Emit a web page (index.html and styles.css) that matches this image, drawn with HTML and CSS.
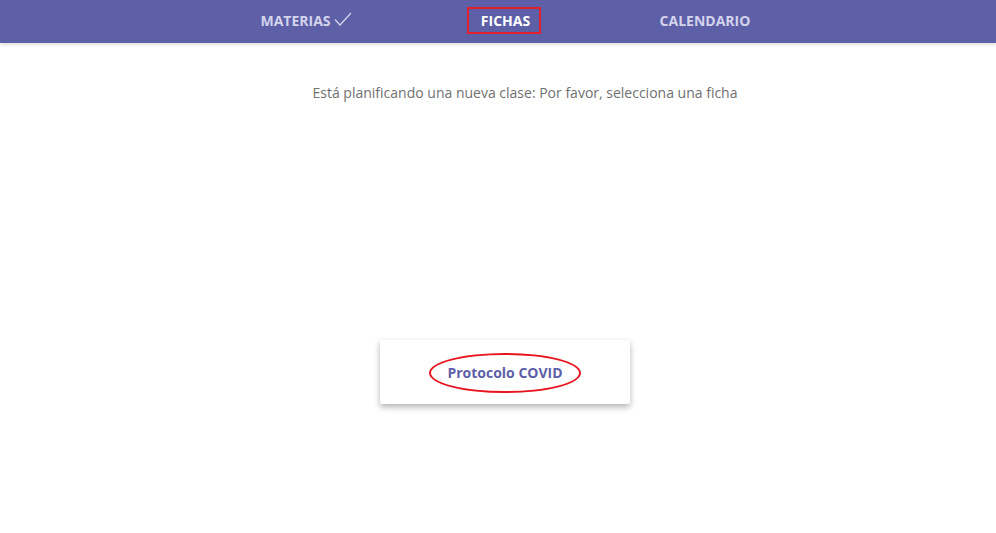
FILE: index.html
```html
<!DOCTYPE html>
<html lang="es">
<head>
    <meta charset="UTF-8">
    <meta name="viewport" content="width=device-width, initial-scale=1.0">
    <title>Fichas</title>
    <link rel="stylesheet" href="styles.css">
</head>
<body>
    <nav class="topbar">
        <div class="tabs">
            <a class="tab done" href="#">MATERIAS
                <svg class="check" width="18" height="15" viewBox="0 0 18 15"><path d="M1 7.5 L6 13 L17 1" fill="none" stroke="#d6d7ee" stroke-width="1.2"/></svg>
            </a>
            <a class="tab active" href="#">FICHAS</a>
            <a class="tab" href="#">CALENDARIO</a>
        </div>
    </nav>

    <main class="content">
        <p class="hint">Está planificando una nueva clase: Por favor, selecciona una ficha</p>

        <div class="cards">
            <div class="card">
                <span class="card-title">Protocolo COVID</span>
            </div>
        </div>
    </main>
</body>
</html>
```

FILE: styles.css
```css
html, body {
    min-height: 100%;
}

body {
    margin: 0;
    padding: 0;
    min-height: 533px;
    font-family: 'Open Sans', sans-serif;
    background-color: #fff;
    color: #6f6f6f;
}

.topbar {
    height: 43px;
    background-color: #5d5fa7;
    box-shadow: 0 2px 3px rgba(0, 0, 0, 0.12);
}

.tabs {
    display: grid;
    grid-template-columns: repeat(3, 200px);
    width: 600px;
    margin-left: 205px;
    height: 100%;
}

.tab {
    display: flex;
    align-items: center;
    justify-content: center;
    padding-bottom: 3px;
    box-sizing: border-box;
    text-decoration: none;
    font-size: 14px;
    font-weight: 700;
    color: #d3d4ec;
}

.tab.done {
    padding-left: 2px;
}

.tab .check {
    margin-left: 3px;
    margin-bottom: 1px;
}

.tab.active {
    justify-self: center;
    align-self: start;
    margin: 7px 0 0 -2px;
    height: 27px;
    padding: 0 9px 1px 12px;
    border: 2px solid #e0202d;
    color: #fff;
}

.content {
    display: flex;
    flex-direction: column;
    align-items: center;
}

.hint {
    margin: 40px 0 0 54px;
    font-size: 14px;
    line-height: 20px;
    color: #707070;
}

.cards {
    margin-top: 237px;
    margin-left: 14px;
    padding-bottom: 20px;
}

.card {
    width: 250px;
    height: 64px;
    display: flex;
    align-items: center;
    justify-content: center;
    background: #fff;
    border-radius: 2px;
    box-shadow: 0 3px 6px rgba(0, 0, 0, 0.3);
}

.card-title {
    padding: 8px 16px 9px 16px;
    margin-top: 2px;
    border: 2px solid #e8151f;
    border-radius: 50%;
    font-size: 14px;
    font-weight: 700;
    color: #5d5fa7;
}
```
